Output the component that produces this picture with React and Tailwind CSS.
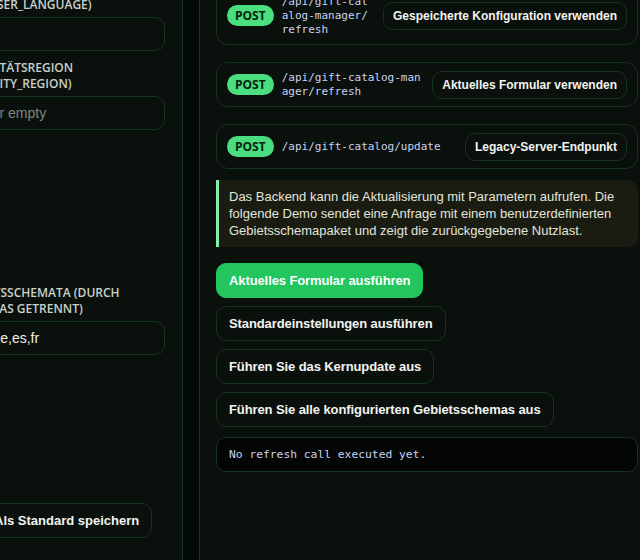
import React from 'react';

const sans = "font-['Liberation_Sans',Arial,sans-serif]";
const mono = "font-['DejaVu_Sans_Mono','Liberation_Mono',monospace]";

function FieldLabel({ lines }) {
  return (
    <div className="mb-[4px] font-['Open_Sans',sans-serif] text-[12px] leading-[16px] font-semibold uppercase text-[#c9d1c9] whitespace-nowrap">
      {lines.map((l) => (
        <div key={l}>{l}</div>
      ))}
    </div>
  );
}

function FieldInput({ value, placeholder }) {
  return (
    <div className={`h-[34px] flex items-center rounded-[10px] border border-[#173321] bg-[#0a100c] px-3 text-[14px] whitespace-nowrap overflow-hidden ${sans}`}>
      {value ? <span className="text-[#eef1ec]">{value}</span> : <span className="text-[#7d887f]">{placeholder}</span>}
    </div>
  );
}

function Endpoint({ path, label }) {
  return (
    <div className="flex items-center rounded-[12px] border border-[#173321] bg-[#0a100c] px-[10px] py-[7.5px]">
      <span className="shrink-0 h-[21px] px-2 flex items-center rounded-full bg-[#4ade80] text-[#06230f] text-[12px] font-bold font-['Open_Sans',sans-serif]">
        POST
      </span>
      <span className={`ml-2 flex-1 min-w-0 break-all text-[11px] leading-[14px] text-[#cad2f2] ${mono}`}>{path}</span>
      <button className={`ml-[10px] shrink-0 h-[28px] px-[9px] rounded-[10px] border border-[#173321] bg-[#0a100c] text-[12px] font-bold text-[#f3f4f1] whitespace-nowrap ${sans}`}>
        {label}
      </button>
    </div>
  );
}

function ActionButton({ children, primary }) {
  return (
    <button
      className={`h-[35px] px-3 rounded-[10px] border text-[13px] font-bold whitespace-nowrap tracking-[-0.1px] ${sans} ${
        primary ? 'bg-[#22c55e] border-[#22c55e] text-white' : 'bg-[#0a100c] border-[#173321] text-[#f3f4f1]'
      }`}
    >
      {children}
    </button>
  );
}

export default function App() {
  return (
    <div className="w-[640px] h-[560px] overflow-hidden flex bg-[#040807]">
      {/* linke Einstellungsspalte (nach links abgeschnitten) */}
      <aside className="shrink-0 w-[223px] ml-[-40px] h-full bg-[#0a100c] border-r border-[#173321] pr-[17px]">
        <div className="mt-[-19px] flex flex-col">
          <FieldLabel lines={['SPRACHE (ÜBERSCHREIBT', 'DEN USER_LANGUAGE)']} />
          <FieldInput value="" placeholder="" />

          <div className="mt-[9px]">
            <FieldLabel lines={['PRIORITÄTSREGION', '(PRIORITY_REGION)']} />
            <div className="mt-[1px]">
              <FieldInput placeholder="us or empty" />
            </div>
          </div>

          <div className="mt-[155px]">
            <FieldLabel lines={['GEBIETSSCHEMATA (DURCH', 'KOMMAS GETRENNT)']} />
            <FieldInput value="en,de,es,fr" />
          </div>

          <div className="mt-[148px] flex">
            <button className={`ml-[21px] h-[35px] px-3 rounded-[10px] border border-[#173321] bg-[#0a100c] text-[13px] font-bold text-[#f3f4f1] whitespace-nowrap ${sans}`}>
              Als Standard speichern
            </button>
          </div>
        </div>
      </aside>

      <div className="shrink-0 w-[16px]" />

      {/* rechte Spalte */}
      <main className="flex-1 h-full bg-[#0a100c] border-l border-[#173321] pl-4 pr-[2px]">
        <div className="mt-[-14px] flex flex-col">
          <div className="flex flex-col gap-[17px]">
            <Endpoint path="/api/gift-catalog-manager/refresh" label="Gespeicherte Konfiguration verwenden" />
            <Endpoint path="/api/gift-catalog-manager/refresh" label="Aktuelles Formular verwenden" />
            <Endpoint path="/api/gift-catalog/update" label="Legacy-Server-Endpunkt" />
          </div>

          <div className={`mt-[11px] rounded-r-[10px] border-l-[3px] border-[#86efac] bg-[#1b1c11] py-2 pl-[10px] pr-3 text-[13px] leading-[17px] text-[#e2e5dc] ${sans}`}>
            Das Backend kann die Aktualisierung mit Parametern aufrufen. Die folgende Demo sendet eine Anfrage mit einem benutzerdefinierten Gebietsschemapaket und zeigt die zurückgegebene Nutzlast.
          </div>

          <div className="mt-[16px] flex flex-col items-start gap-2">
            <ActionButton primary>Aktuelles Formular ausführen</ActionButton>
            <ActionButton>Standardeinstellungen ausführen</ActionButton>
            <ActionButton>Führen Sie das Kernupdate aus</ActionButton>
            <ActionButton>Führen Sie alle konfigurierten Gebietsschemas aus</ActionButton>
          </div>

          <div className={`mt-[10px] h-[35px] flex items-center rounded-[10px] border border-[#173321] bg-[#030604] px-3 pt-[2px] text-[11.3px] text-[#cad2f2] ${mono}`}>
            No refresh call executed yet.
          </div>
        </div>
      </main>
    </div>
  );
}
